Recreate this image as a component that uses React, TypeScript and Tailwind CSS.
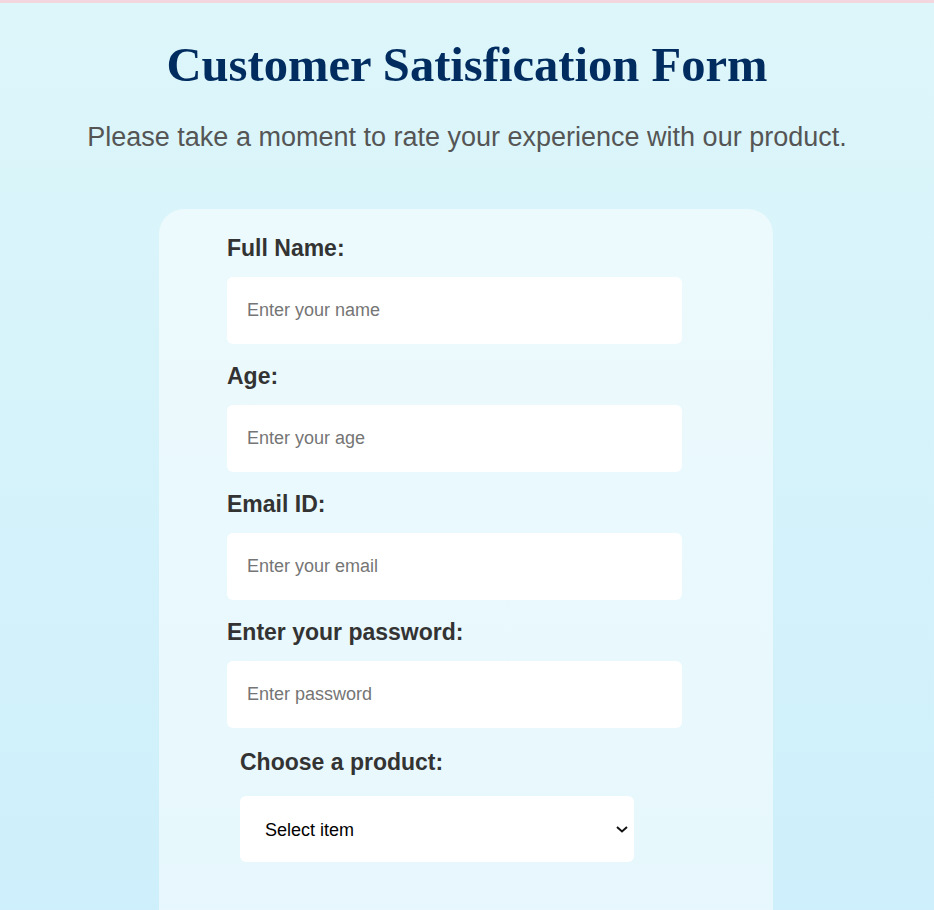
import React from 'react';

const fields = [
  { label: 'Full Name:', placeholder: 'Enter your name', type: 'text' },
  { label: 'Age:', placeholder: 'Enter your age', type: 'number' },
  { label: 'Email ID:', placeholder: 'Enter your email', type: 'email' },
  { label: 'Enter your password:', placeholder: 'Enter password', type: 'password' },
];

const App: React.FC = () => {
  return (
    <div className="min-h-screen border-t-[3px] border-[#f4d6de] bg-gradient-to-b from-[#ddf6fa] to-[#cdeffb] font-['Liberation_Sans',Arial,sans-serif]">
      {/* Heading */}
      <h1 className="mt-[34px] text-center font-['Liberation_Serif','Times_New_Roman',serif] text-[48.6px] font-bold leading-[56px] text-[#012c5f]">
        Customer Satisfication Form
      </h1>
      <p className="mt-[29px] text-center text-[27px] leading-[31px] text-[#555555]">
        Please take a moment to rate your experience with our product.
      </p>

      {/* Form card */}
      <form className="mx-auto mt-[56px] w-[614px] -translate-x-px rounded-[25px] bg-white/50 pb-[90px] pl-[68px] pt-[26px]">
        {fields.map((f) => (
          <div key={f.label} className="mb-[19px]">
            <label className="mb-4 block text-[23px] font-bold leading-[26px] text-[#333333]">
              {f.label}
            </label>
            <input
              type={f.type}
              placeholder={f.placeholder}
              className="block h-[67px] w-[455px] rounded-md bg-white px-5 text-[18px] text-[#333] outline-none placeholder:text-[#757575]"
            />
          </div>
        ))}

        {/* Product select */}
        <div className="pl-[13px] pt-[2px]">
          <label className="mb-[21px] block text-[23px] font-bold leading-[26px] text-[#333333]">
            Choose a product:
          </label>
          <div className="relative w-[394px]">
            <select className="block h-[66px] w-full appearance-none rounded-md bg-white pl-[25px] pt-[2px] text-[18px] text-black outline-none">
              <option>Select item</option>
              <option>Product A</option>
              <option>Product B</option>
              <option>Product C</option>
            </select>
            <svg
              className="pointer-events-none absolute right-[6px] top-[30px]"
              width="12"
              height="7"
              viewBox="0 0 12 7"
              fill="none"
            >
              <path d="M1 1l5 4.5L11 1" stroke="#111" strokeWidth="2" />
            </svg>
          </div>
        </div>
      </form>
    </div>
  );
};

export default App;
